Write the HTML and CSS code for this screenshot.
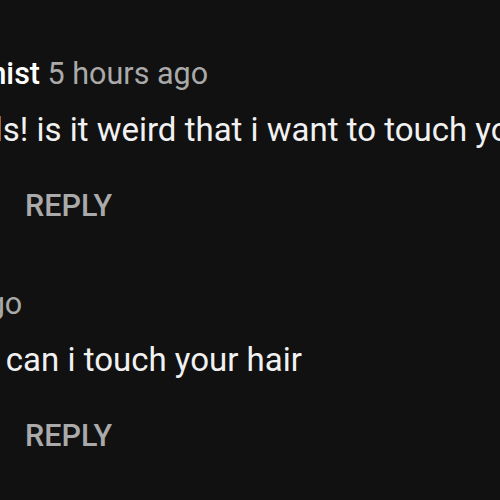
FILE: index.html
```html
<!DOCTYPE html>
<html>

<head>
	<title>comments</title>
	<meta charset='utf-8' />
	<link rel="stylesheet" href="styles.css">
</head>

<body>
	<div class="comments">
		<div class="comment">
			<div class="meta">
				<a href="#" class="author">Wandering Pianist</a>
				<span class="time">5 hours ago</span>
			</div>
			<div class="text">i love your curls! is it weird that i want to touch your hair</div>
			<div class="toolbar">
				<a href="#" class="reply">REPLY</a>
			</div>
		</div>
		<div class="comment">
			<div class="meta">
				<a href="#" class="author">Kate</a>
				<span class="time">2 hours ago</span>
			</div>
			<div class="text">oh my god pls can i touch your hair</div>
			<div class="toolbar">
				<a href="#" class="reply">REPLY</a>
			</div>
		</div>
	</div>
</body>

</html>
```

FILE: styles.css
```css
body {
	margin: 0;
	background: #111;
	overflow: hidden;
	font-family: Roboto, "Noto Sans", sans-serif;
}

a {
	text-decoration: none;
}

.comments {
	margin-left: -208px;
	padding-top: 53px;
	white-space: nowrap;
}

.comment + .comment {
	margin-top: 56px;
}

.meta {
	font-size: 30.5px;
	line-height: 42px;
}

.author {
	color: #fff;
	font-weight: 500;
	margin-right: 0;
}

.time {
	color: #aaa;
}

.text {
	margin-top: 12px;
	font-size: 33px;
	line-height: 46px;
	color: #f1f1f1;
}

.toolbar {
	margin-top: 32px;
	padding-left: 233px;
	font-size: 30.5px;
	line-height: 42px;
}

.reply {
	color: #aaa;
	font-weight: 500;
}
```
